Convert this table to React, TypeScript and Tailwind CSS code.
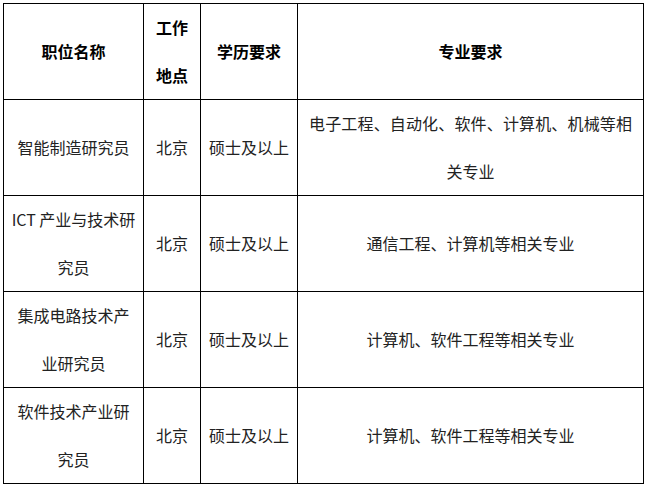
import React from "react";

const rows = [
  { title: "智能制造研究员", place: "北京", edu: "硕士及以上", major: "long" },
  { title: "ICT 产业与技术研究员", place: "北京", edu: "硕士及以上", major: "通信工程、计算机等相关专业" },
  { title: "集成电路技术产业研究员", place: "北京", edu: "硕士及以上", major: "计算机、软件工程等相关专业" },
  { title: "软件技术产业研究员", place: "北京", edu: "硕士及以上", major: "计算机、软件工程等相关专业" },
];

const cell = "border border-black px-[7px] py-0 align-middle text-center";

export default function App() {
  return (
    <div
      className="bg-white w-[645px] h-[487px] pt-[3px] pl-[3px] text-[16px] leading-[47.5px] text-[#222]"
      style={{ fontFamily: '"Noto Sans CJK SC", "Liberation Sans", sans-serif' }}
    >
      <table className="border-collapse table-fixed w-[640px]">
        <colgroup>
          <col className="w-[140px]" />
          <col className="w-[57px]" />
          <col className="w-[97px]" />
          <col className="w-[346px]" />
        </colgroup>
        <thead>
          <tr className="h-[96px] font-bold text-black">
            <th className={cell}>职位名称</th>
            <th className={cell}>
              工作
              <br />
              地点
            </th>
            <th className={cell}>学历要求</th>
            <th className={cell}>专业要求</th>
          </tr>
        </thead>
        <tbody>
          {rows.map((r, i) => (
            <tr key={i} className="h-[96px]">
              <td className={cell}>{r.title}</td>
              <td className={cell}>{r.place}</td>
              <td className={cell}>{r.edu}</td>
              <td className={cell}>
                {r.major === "long" ? (
                  <>
                    <div className="w-[323px] mx-auto text-justify [text-align-last:justify]">
                      电子工程、自动化、软件、计算机、机械等相
                    </div>
                    <div>关专业</div>
                  </>
                ) : (
                  r.major
                )}
              </td>
            </tr>
          ))}
        </tbody>
      </table>
    </div>
  );
}
